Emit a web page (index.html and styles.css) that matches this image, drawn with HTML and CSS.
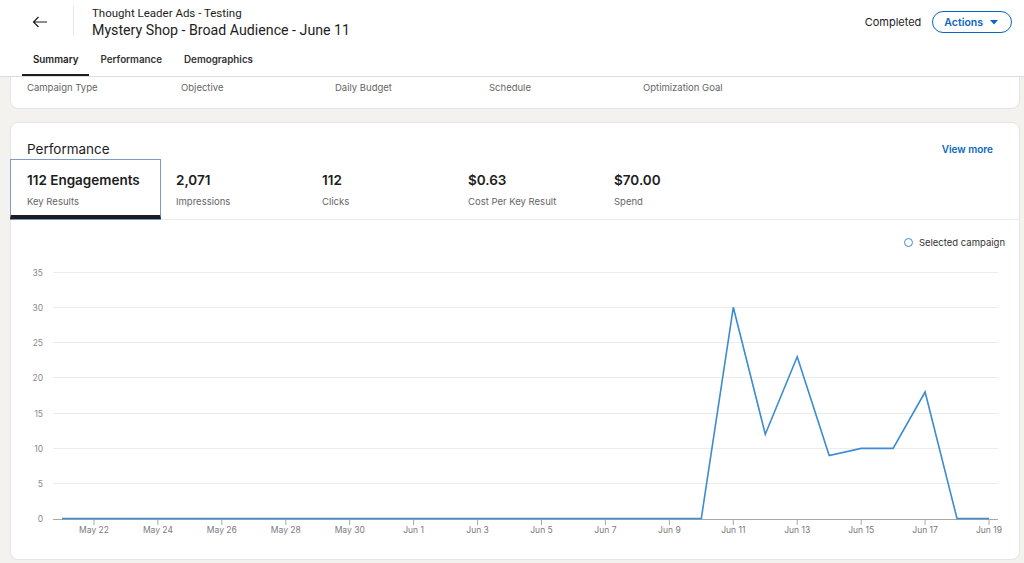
FILE: index.html
```html
<!DOCTYPE html>
<html lang="en">
<head>
<meta charset="utf-8">
<title>Mystery Shop - Broad Audience - June 11</title>
<link rel="stylesheet" href="styles.css">
</head>
<body>
<header class="topbar">
  <div class="topbar-main">
    <button class="back" aria-label="Back">
      <svg width="16" height="12" viewBox="0 0 16 12"><path d="M15 6H1.5M6.5 1L1.5 6l5 5" fill="none" stroke="#1d1d1d" stroke-width="1.2"/></svg>
    </button>
    <div class="divider"></div>
    <div class="titles">
      <div class="subtitle">Thought Leader Ads - Testing</div>
      <h1 class="title">Mystery Shop - Broad Audience - June 11</h1>
    </div>
    <div class="status">Completed</div>
    <button class="actions">Actions <svg width="8" height="5" viewBox="0 0 8 5"><path d="M0 0h8L4 4.5z" fill="#0a66c2"/></svg></button>
  </div>
  <nav class="tabs">
    <a class="tab active">Summary</a>
    <a class="tab">Performance</a>
    <a class="tab">Demographics</a>
  </nav>
</header>

<section class="card summary">
  <div class="summary-row">
    <span class="summary-label">Campaign Type</span>
    <span class="summary-label">Objective</span>
    <span class="summary-label">Daily Budget</span>
    <span class="summary-label">Schedule</span>
    <span class="summary-label">Optimization Goal</span>
  </div>
</section>

<section class="card perf">
  <div class="perf-head">
    <h2 class="perf-title">Performance</h2>
    <a class="view-more">View more</a>
  </div>
  <div class="metrics">
    <div class="metric selected"><div class="m-value">112 Engagements</div><div class="m-label">Key Results</div></div>
    <div class="metric"><div class="m-value">2,071</div><div class="m-label">Impressions</div></div>
    <div class="metric"><div class="m-value">112</div><div class="m-label">Clicks</div></div>
    <div class="metric"><div class="m-value">$0.63</div><div class="m-label">Cost Per Key Result</div></div>
    <div class="metric"><div class="m-value">$70.00</div><div class="m-label">Spend</div></div>
  </div>
  <div class="legend"><span class="legend-dot"></span>Selected campaign</div>
  <svg class="chart" width="1008" height="298" viewBox="0 0 1008 298">
    <g class="grid" stroke="#ececec" stroke-width="1">
      <line x1="42" x2="987" y1="12.5" y2="12.5"/>
      <line x1="42" x2="987" y1="47.5" y2="47.5"/>
      <line x1="42" x2="987" y1="82.5" y2="82.5"/>
      <line x1="42" x2="987" y1="117.5" y2="117.5"/>
      <line x1="42" x2="987" y1="153.5" y2="153.5"/>
      <line x1="42" x2="987" y1="188.5" y2="188.5"/>
      <line x1="42" x2="987" y1="223.5" y2="223.5"/>
    </g>
    <g class="ylabels" font-size="8.5" fill="#8a8a8a" text-anchor="end">
      <text x="32" y="15.5">35</text>
      <text x="32" y="50.5">30</text>
      <text x="32" y="85.5">25</text>
      <text x="32" y="120.5">20</text>
      <text x="32" y="156.5">15</text>
      <text x="32" y="191.5">10</text>
      <text x="32" y="226.5">5</text>
      <text x="32" y="262">0</text>
    </g>
    <line x1="42" x2="987" y1="259.5" y2="259.5" stroke="#a8a8a8" stroke-width="1"/>
    <g class="ticks" stroke="#a8a8a8" stroke-width="1">
      <line x1="83" x2="83" y1="259" y2="265"/>
      <line x1="146.9" x2="146.9" y1="259" y2="265"/>
      <line x1="210.8" x2="210.8" y1="259" y2="265"/>
      <line x1="274.8" x2="274.8" y1="259" y2="265"/>
      <line x1="338.7" x2="338.7" y1="259" y2="265"/>
      <line x1="402.6" x2="402.6" y1="259" y2="265"/>
      <line x1="466.6" x2="466.6" y1="259" y2="265"/>
      <line x1="530.5" x2="530.5" y1="259" y2="265"/>
      <line x1="594.4" x2="594.4" y1="259" y2="265"/>
      <line x1="658.4" x2="658.4" y1="259" y2="265"/>
      <line x1="722.3" x2="722.3" y1="259" y2="265"/>
      <line x1="786.2" x2="786.2" y1="259" y2="265"/>
      <line x1="850.2" x2="850.2" y1="259" y2="265"/>
      <line x1="914.1" x2="914.1" y1="259" y2="265"/>
      <line x1="978" x2="978" y1="259" y2="265"/>
    </g>
    <g class="xlabels" font-size="8.5" fill="#7a7a7a" text-anchor="middle">
      <text x="83" y="273">May 22</text>
      <text x="146.9" y="273">May 24</text>
      <text x="210.8" y="273">May 26</text>
      <text x="274.8" y="273">May 28</text>
      <text x="338.7" y="273">May 30</text>
      <text x="402.6" y="273">Jun 1</text>
      <text x="466.6" y="273">Jun 3</text>
      <text x="530.5" y="273">Jun 5</text>
      <text x="594.4" y="273">Jun 7</text>
      <text x="658.4" y="273">Jun 9</text>
      <text x="722.3" y="273">Jun 11</text>
      <text x="786.2" y="273">Jun 13</text>
      <text x="850.2" y="273">Jun 15</text>
      <text x="914.1" y="273">Jun 17</text>
      <text x="978" y="273">Jun 19</text>
    </g>
    <polyline fill="none" stroke="#3d8bd0" stroke-width="1.6" stroke-linejoin="miter"
      points="51,258.5 690.3,258.5 722.3,47.3 754.3,174.3 786.2,96.7 818.2,195.5 850.2,188.4 882.1,188.4 914.1,132 946,258.5 978,258.5"/>
  </svg>
</section>
</body>
</html>
```

FILE: styles.css
```css
* { box-sizing: border-box; }
body {
  margin: 0;
  background: #f3f2ef;
  font-family: Inter, "Noto Sans", "Liberation Sans", sans-serif;
  color: #1d1d1d;
}
h1, h2 { margin: 0; font-weight: 400; }
button { font-family: inherit; }

.topbar {
  background: #fff;
  height: 77px;
  border-bottom: 1px solid #dcdcdc;
}
.topbar-main {
  display: flex;
  align-items: center;
  height: 44px;
  padding: 0 12px 0 26px;
}
.back {
  border: 0;
  background: none;
  padding: 0;
  width: 28px;
  height: 28px;
  display: flex;
  align-items: center;
  justify-content: center;
  margin-right: 19px;
}
.divider {
  width: 1px;
  height: 30px;
  background: #e6e6e6;
  margin-right: 18px;
  align-self: flex-start;
  margin-top: 6px;
}
.titles { flex: 1; padding-top: 2px; font-family: Roboto, Inter, sans-serif; }
.subtitle { font-size: 11.5px; line-height: 15px; }
.title { font-size: 14.2px; line-height: 19px; }
.status { font-size: 11px; margin-right: 11px; }
.actions {
  display: flex;
  align-items: center;
  gap: 7px;
  height: 22px;
  padding: 0 13px 0 11px;
  border: 1px solid #0a66c2;
  border-radius: 11px;
  background: #fff;
  color: #0a66c2;
  font-size: 10.5px;
  font-weight: 600;
}

.tabs {
  display: flex;
  padding-left: 22px;
  height: 32px;
}
.tab {
  display: flex;
  align-items: center;
  font-size: 9.8px;
  font-weight: 600;
  color: #333;
  padding: 0 11px;
  border-bottom: 2px solid transparent;
}
.tab.active {
  border-bottom-color: #1d1d1d;
  color: #1d1d1d;
}

.card {
  background: #fff;
  margin: 0 4px 0 10px;
  border: 1px solid #e4e4e4;
}
.summary {
  border-top: 0;
  border-radius: 0 0 8px 8px;
  height: 32px;
}
.summary-row {
  display: grid;
  grid-template-columns: repeat(5, 154px);
  padding: 4px 0 0 16px;
}
.summary-label { font-size: 9.5px; color: #666; line-height: 13px; }

.perf {
  margin-top: 13px;
  border-radius: 8px;
  height: 438px;
}
.perf-head {
  display: flex;
  align-items: center;
  justify-content: space-between;
  padding: 16px 26px 0 16px;
  height: 36px;
}
.perf-title { font-size: 13.5px; line-height: 18px; }
.view-more { font-size: 10px; font-weight: 600; color: #0a66c2; }

.metrics {
  display: flex;
  height: 61px;
  border-bottom: 1px solid #ebebeb;
}
.metric {
  width: 146px;
  padding: 13px 0 0 16px;
}
.metric.selected {
  width: 151px;
  margin-left: -1px;
  border: 1px solid #7f9cc4;
  border-bottom: 4px solid #1d1d1d;
  box-shadow: 0 1px 0 #6d95c9;
  padding-top: 12px;
}
.metric + .metric { padding-left: 15px; }
.m-value { font-size: 13.5px; font-weight: 600; line-height: 17px; }
.m-label { font-size: 9.5px; color: #666; margin-top: 6px; line-height: 13px; }

.legend {
  display: flex;
  align-items: center;
  justify-content: flex-end;
  font-size: 9.5px;
  color: #333;
  padding: 5px 14px 0 0;
  height: 40px;
  line-height: 12px;
}
.legend-dot {
  width: 9px;
  height: 9px;
  border: 1.6px solid #3d8bd0;
  border-radius: 50%;
  margin-right: 6px;
}
.chart { display: block; font-family: Inter, "Liberation Sans", sans-serif; }
```
